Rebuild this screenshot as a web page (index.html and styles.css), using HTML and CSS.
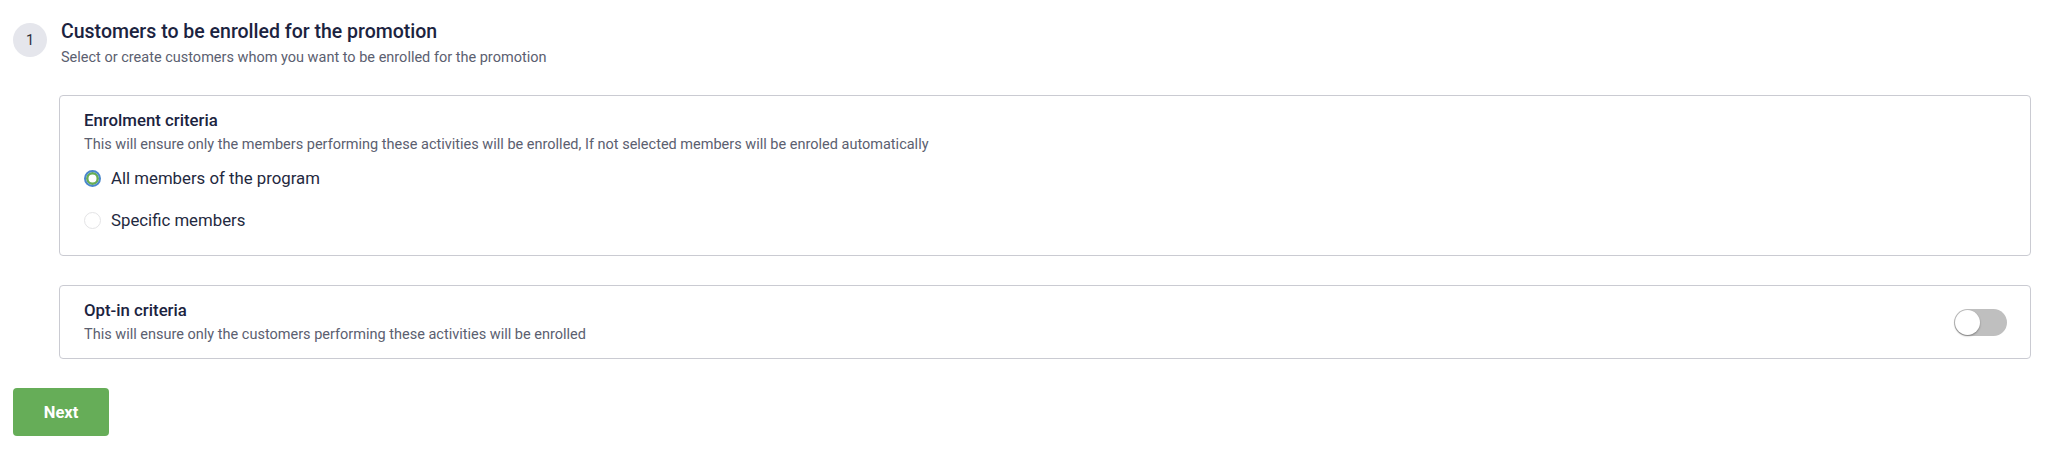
FILE: index.html
```html
<!DOCTYPE html>
<html lang="en">
<head>
<meta charset="utf-8">
<title>Promotion enrolment</title>
<link rel="stylesheet" href="styles.css">
</head>
<body>
<div class="page">
  <div class="step-header">
    <div class="step-num">1</div>
    <div class="step-text">
      <div class="step-title">Customers to be enrolled for the promotion</div>
      <div class="step-sub">Select or create customers whom you want to be enrolled for the promotion</div>
    </div>
  </div>

  <div class="cards">
    <div class="card card-enrol">
      <div class="card-title">Enrolment criteria</div>
      <div class="card-sub">This will ensure only the members performing these activities will be enrolled, If not selected members will be enroled automatically</div>
      <div class="radios">
        <label class="radio-row"><span class="radio radio-on"></span><span class="radio-label">All members of the program</span></label>
        <label class="radio-row"><span class="radio"></span><span class="radio-label">Specific members</span></label>
      </div>
    </div>

    <div class="card card-optin">
      <div class="optin-text">
        <div class="card-title">Opt-in criteria</div>
        <div class="card-sub">This will ensure only the customers performing these activities will be enrolled</div>
      </div>
      <div class="toggle"><span class="knob"></span></div>
    </div>
  </div>

  <button class="next-btn">Next</button>
</div>
</body>
</html>
```

FILE: styles.css
```css
html, body {
  margin: 0;
  padding: 0;
  background: #ffffff;
}
body {
  font-family: Roboto, "Liberation Sans", Arial, sans-serif;
  color: #1b2340;
}
.page {
  padding: 20px 17px 0 13px;
}
.step-header {
  display: flex;
  align-items: flex-start;
  gap: 14px;
}
.step-num {
  width: 34px;
  height: 34px;
  margin-top: 3px;
  border-radius: 50%;
  background: #e5e6ec;
  color: #2c2f3a;
  font-size: 14.5px;
  display: flex;
  align-items: center;
  justify-content: center;
  flex: none;
}
.step-title {
  font-size: 19.5px;
  line-height: 24px;
  font-weight: 500;
  color: #1b2340;
}
.step-sub {
  margin-top: 4px;
  font-size: 14.5px;
  line-height: 20px;
  color: #5b6070;
}
.cards {
  margin: 27px 0 0 46px;
}
.card {
  border: 1px solid #cacbd2;
  border-radius: 4px;
  padding: 13px 24px 0 24px;
}
.card-enrol {
  padding-bottom: 23px;
}
.card-optin {
  margin-top: 29px;
  padding-bottom: 13px;
  padding-right: 23px;
  display: flex;
  align-items: center;
  justify-content: space-between;
}
.card-title {
  font-size: 16.8px;
  line-height: 22px;
  font-weight: 500;
  color: #1b2340;
}
.card-sub {
  margin-top: 4px;
  font-size: 14.5px;
  line-height: 20px;
  color: #5b6070;
}
.radios {
  margin-top: 11px;
  display: flex;
  flex-direction: column;
  gap: 18px;
}
.radio-row {
  display: flex;
  align-items: center;
  gap: 10px;
  height: 24px;
}
.radio {
  box-sizing: border-box;
  width: 17px;
  height: 17px;
  border-radius: 50%;
  border: 1px solid #e4e4e6;
  background: #ffffff;
  flex: none;
}
.radio-on {
  border: 2px solid #4a87cc;
  box-shadow: inset 0 0 0 2.5px #67ae55;
}
.radio-label {
  font-size: 16.8px;
  line-height: 24px;
  color: #1f2940;
}
.toggle {
  position: relative;
  width: 53px;
  height: 27px;
  border-radius: 14px;
  background: #bfbfbf;
  flex: none;
}
.knob {
  position: absolute;
  left: 1px;
  top: 1px;
  width: 25px;
  height: 25px;
  border-radius: 50%;
  background: #ffffff;
  box-shadow: 0 1px 2px rgba(0,0,0,0.35);
}
.next-btn {
  margin-top: 29px;
  width: 96px;
  height: 48px;
  border: none;
  border-radius: 4px;
  background: #66ad58;
  color: #ffffff;
  font-family: Roboto, "Liberation Sans", Arial, sans-serif;
  font-size: 16.5px;
  font-weight: 700;
  cursor: pointer;
}
```
